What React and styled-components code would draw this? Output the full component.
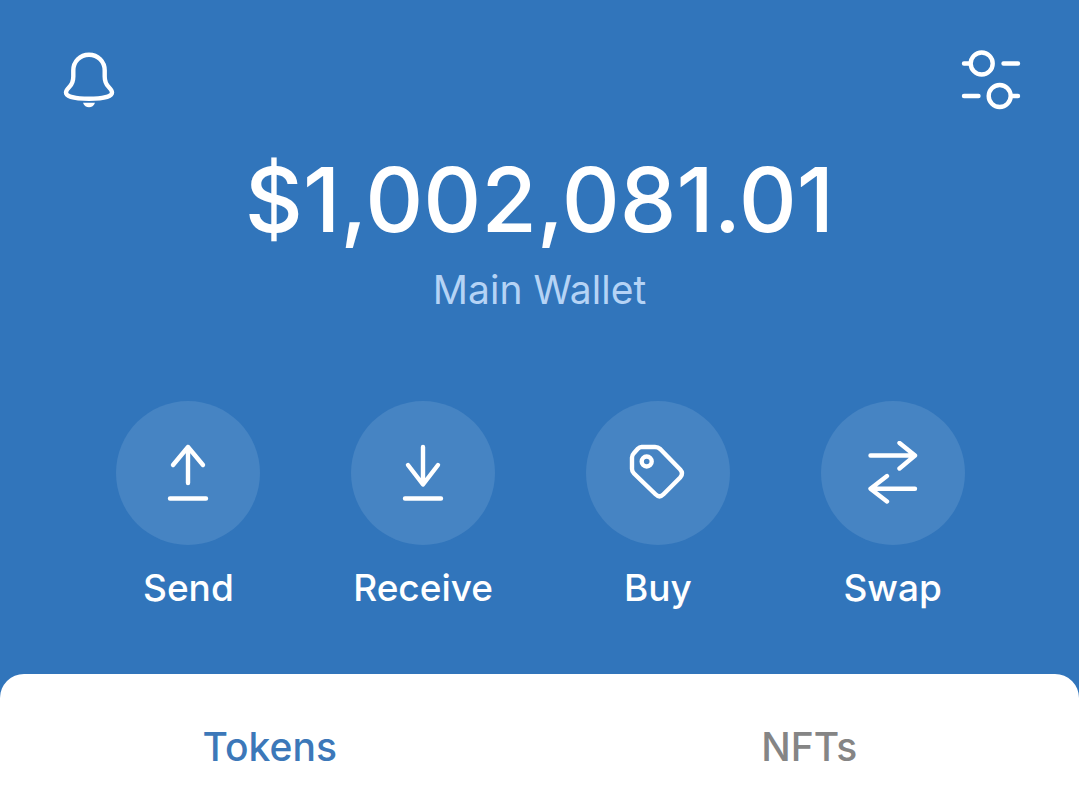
import React, { useState } from "react";
import styled, { createGlobalStyle } from "styled-components";

const actions = [
  {
    label: "Send",
    icon: <path d="M30 40V4M15 22L30 4l15 18M12 55.5h36" />,
  },
  {
    label: "Receive",
    icon: <path d="M30 4v37M15 22l15 19.5L45 22M12 55.5h36" />,
  },
  {
    label: "Buy",
    icon: (
      <>
        <path d="M13.5 4H27q3 0 5.2 2L52.2 26.5q3.600 4 0 8L35.500 51.300q-4 4-8 0L6 30.500Q4 28.500 4 26V14.500q0-2.500 1.800-4.300l4-4.400Q11.500 4 13.500 4z" />
        <circle cx="18.700" cy="18.500" r="5" />
      </>
    ),
  },
  {
    label: "Swap",
    icon: (
      <path d="M7.500 12.500H51M36.500 0L52 12.500 36.500 25.500M52 45.700H8M24 33L7.500 45.700 24 58.500" />
    ),
  },
];

const tabs = ["Tokens", "NFTs"];

export default function App() {
  const [activeTab, setActiveTab] = useState("Tokens");

  return (
    <Page>
      <GlobalStyle />
      <TopBar>
        <IconButton aria-label="Notifications">
          <Icon viewBox="0 0 60 60">
            <path d="M30 4.700c-9 0-15.700 6.800-15.700 15.800v6c0 4.500-1 7.500-4 10.500-2 2-3.300 3.700-3.300 5.500 0 4 9.500 6.300 23 6.300s23-2.300 23-6.300c0-1.800-1.300-3.500-3.300-5.500-3-3-4-6-4-10.500v-6c0-9-6.700-15.800-15.700-15.800z" />
            <path d="M24 52.700h12c-1 3-3.500 4.500-6 4.500s-5-1.500-6-4.500z" fill="#fff" stroke="none" />
          </Icon>
        </IconButton>
        <IconButton aria-label="Settings">
          <Icon viewBox="0 0 60 60">
            <circle cx="20.700" cy="13.500" r="11" />
            <circle cx="38.700" cy="46" r="11" />
            <path d="M3 13.500h6M42.500 13.500H57M3 46h14.500M51 46h6" />
          </Icon>
        </IconButton>
      </TopBar>

      <Balance>$1,002,081.01</Balance>
      <WalletName>Main Wallet</WalletName>

      <Actions>
        {actions.map(({ label, icon }) => (
          <ActionButton key={label}>
            <ActionCircle>
              <ActionIcon viewBox="-2 -2 64 64">{icon}</ActionIcon>
            </ActionCircle>
            {label}
          </ActionButton>
        ))}
      </Actions>

      <Sheet role="tablist">
        {tabs.map((tab) => (
          <Tab
            key={tab}
            role="tab"
            aria-selected={tab === activeTab}
            $active={tab === activeTab}
            onClick={() => setActiveTab(tab)}
          >
            {tab}
          </Tab>
        ))}
      </Sheet>
    </Page>
  );
}

const GlobalStyle = createGlobalStyle`
  * {
    box-sizing: border-box;
  }

  body {
    margin: 0;
    background: #3175bb;
    font-family: Inter, "Liberation Sans", sans-serif;
  }

  button {
    border: 0;
    padding: 0;
    background: none;
    font-family: inherit;
    cursor: pointer;
  }
`;

const Page = styled.main`
  display: flex;
  flex-direction: column;
  min-height: 100vh;
  background: #3175bb;
  color: #fff;
`;

const TopBar = styled.header`
  display: flex;
  justify-content: space-between;
  padding: 50px 58px 0px 59px;
`;

const IconButton = styled.button`
  display: flex;
`;

const Icon = styled.svg`
  width: 60px;
  height: 60px;
  fill: none;
  stroke: #fff;
  stroke-width: 4.4;
  stroke-linecap: round;
  stroke-linejoin: round;
`;

const Balance = styled.h1`
  margin: 36px 0px 0px;
  font-size: 90px;
  font-weight: 500;
  line-height: 108px;
  text-align: center;
`;

const WalletName = styled.p`
  margin: 12px 0px 0px;
  font-size: 39px;
  line-height: 48px;
  text-align: center;
  color: #b5d3f5;
`;

const Actions = styled.div`
  display: grid;
  grid-template-columns: repeat(4, 1fr);
  margin-top: 87px;
  padding: 0px 69px 0px 71px;
`;

const ActionButton = styled.button`
  display: flex;
  flex-direction: column;
  align-items: center;
  gap: 20px;
  font-size: 37px;
  font-weight: 500;
  line-height: 46px;
  color: #fff;
`;

const ActionCircle = styled.span`
  display: flex;
  align-items: center;
  justify-content: center;
  width: 144px;
  height: 144px;
  border-radius: 50%;
  background: #4684c3;
`;

const ActionIcon = styled(Icon)`
  width: 64px;
  height: 64px;
`;

const Sheet = styled.div`
  display: grid;
  grid-template-columns: 1fr 1fr;
  flex: 1;
  align-items: start;
  margin-top: 63px;
  padding-top: 49px;
  border-radius: 24px 24px 0px 0px;
  background: #fff;
`;

const Tab = styled.button`
  font-size: 39px;
  font-weight: 500;
  line-height: 48px;
  color: ${({ $active }) => ($active ? "#3c78b9" : "#858585")};
`;
